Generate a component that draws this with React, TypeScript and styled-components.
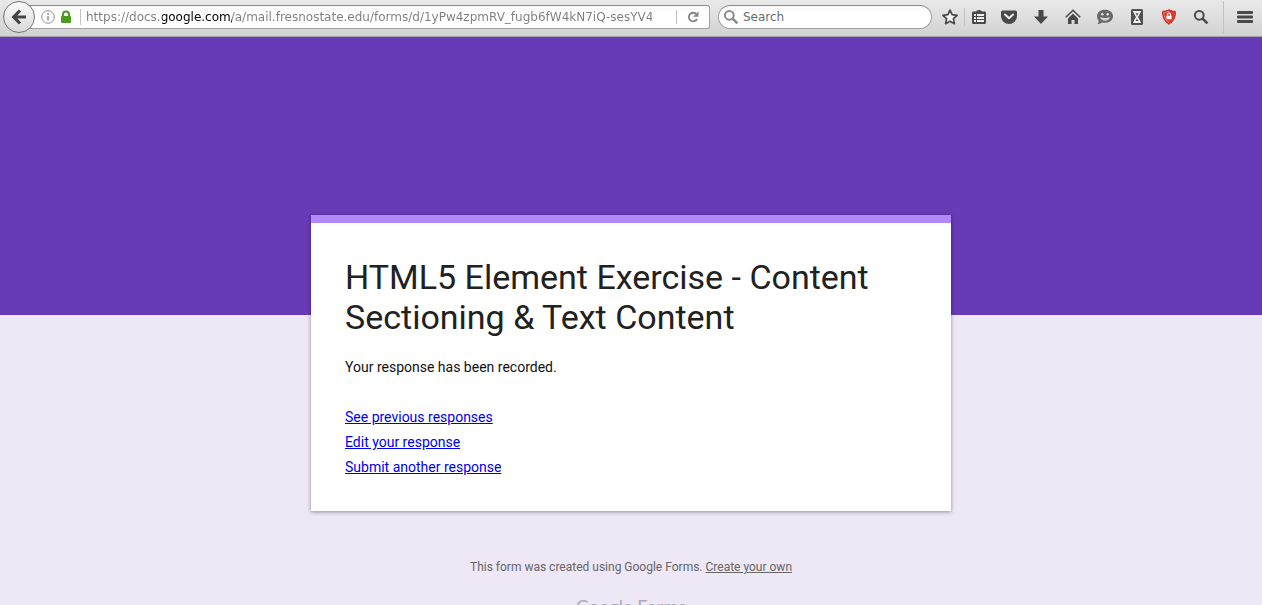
import React from "react";
import styled, { createGlobalStyle } from "styled-components";

const GlobalStyle = createGlobalStyle`
  *, *::before, *::after { box-sizing: border-box; }
  body { margin: 0; background: #ede7f6; }
`;

const Browser = styled.div`
  display: flex;
  flex-direction: column;
  height: 100vh;
  font-family: Roboto, "Liberation Sans", sans-serif;
`;

const Toolbar = styled.header`
  display: flex;
  align-items: center;
  flex: none;
  height: 37px;
  padding: 0 8px 3px 3px;
  background: linear-gradient(#e9e9e9, #d2d2d2);
  border-bottom: 1px solid #a6a2ae;
`;

const BackButton = styled.button`
  position: relative;
  display: flex;
  align-items: center;
  justify-content: center;
  flex: none;
  width: 32px;
  height: 32px;
  padding: 0;
  border: 1px solid #747474;
  border-radius: 50%;
  background: linear-gradient(#fafafa, #d9d9d9);
`;

const AddressBar = styled.div`
  display: flex;
  align-items: center;
  flex: 1;
  min-width: 0;
  height: 24px;
  margin-left: -8px;
  padding-left: 11px;
  border: 1px solid #a2a2a2;
  border-top-color: #8c8c8c;
  border-radius: 0 3px 3px 0;
  background: linear-gradient(#f6f6f6, #ffffff 6px);
`;

const BarIcon = styled.button`
  display: flex;
  align-items: center;
  justify-content: center;
  flex: none;
  width: 18px;
  height: 22px;
  padding: 0;
  border: 0;
  background: none;
`;

const Divider = styled.span<{ $height: number; $gap: number }>`
  flex: none;
  width: 1px;
  height: ${(p) => p.$height}px;
  margin: 0 ${(p) => p.$gap}px;
  background: #c2c2c2;
`;

const UrlInput = styled.input`
  flex: 1;
  min-width: 0;
  height: 20px;
  margin-right: 24px;
  padding: 0;
  border: 0;
  outline: 0;
  font: 12px/20px "DejaVu Sans", sans-serif;
  color: #7d7d7d;
  background: linear-gradient(90deg, #7d7d7d 76px, #000000 76px, #000000 146px, #7d7d7d 146px);
  background-clip: text;
  -webkit-background-clip: text;
  -webkit-text-fill-color: transparent;
`;

const ReloadButton = styled(BarIcon)`
  width: 24px;
  margin: 0 4px;
`;

const SearchBox = styled.label`
  display: flex;
  align-items: center;
  flex: none;
  width: 214px;
  height: 24px;
  margin: 0 9px 0 8px;
  padding: 0 12px 0 4px;
  gap: 4px;
  border: 1px solid #a2a2a2;
  border-top-color: #8c8c8c;
  border-radius: 12px;
  background: linear-gradient(#f6f6f6, #ffffff 6px);
`;

const SearchInput = styled.input`
  flex: 1;
  min-width: 0;
  height: 20px;
  padding: 0;
  border: 0;
  outline: 0;
  background: none;
  font: 12px/20px "DejaVu Sans", sans-serif;
  color: #222222;
  &::placeholder { color: #6c6c6c; opacity: 1; }
`;

const Tools = styled.nav`
  display: flex;
  align-items: center;
  flex: none;
`;

const ToolList = styled.div`
  display: flex;
  gap: 14px;
  margin: 0 13px 0 12px;
`;

const MenuButton = styled(BarIcon)`
  margin-left: 12px;
`;

const Page = styled.main`
  flex: 1;
  min-height: 0;
  overflow: hidden;
  padding-top: 178px;
  background: linear-gradient(#673ab7 278px, #ede7f6 278px);
`;

const Card = styled.section`
  width: 640px;
  max-width: 100%;
  margin: 0 auto;
  padding: 34px 34px 31px;
  border-top: 8px solid #b388ff;
  background: #ffffff;
  box-shadow: 0 1px 4px rgba(0, 0, 0, 0.4);
  color: #212121;
`;

const Title = styled.h1`
  margin: 0 0 18px;
  font-size: 34px;
  font-weight: 400;
  line-height: 40px;
`;

const Message = styled.p`
  margin: 0 0 25px;
  font-size: 14px;
  line-height: 25px;
  color: #111111;
`;

const Links = styled.ul`
  margin: 0;
  padding: 0;
  list-style: none;
  font-size: 14px;
  line-height: 25px;
`;

const Link = styled.a`
  color: #0000ee;
`;

const Footer = styled.footer`
  margin-top: 47px;
  text-align: center;
  font-size: 12px;
  line-height: 18px;
  color: #666666;
`;

const FooterText = styled.p`
  margin: 0;
  a { color: inherit; }
`;

const Logo = styled.p`
  margin: 18px 0 0;
  font: 18px/24px Lato, sans-serif;
  color: #b0a9bb;
`;

const ink = "#494949";

const BackIcon = () => (
  <svg width="16" height="16" viewBox="0 0 16 16" fill="none" stroke="#444" strokeWidth="3.2" aria-hidden="true">
    <path d="M9 1.5 2.7 8 9 14.5M3 8h12" />
  </svg>
);
const InfoIcon = () => (
  <svg width="14" height="14" viewBox="0 0 14 14" fill="none" stroke="#919191" aria-hidden="true">
    <circle cx="7" cy="7" r="6.3" />
    <path d="M7 6v4.5M7 3.3v1.6" strokeWidth="1.5" />
  </svg>
);
const LockIcon = () => (
  <svg width="12" height="14" viewBox="0 0 12 14" aria-hidden="true">
    <path d="M3 7V4.5a3 3 0 0 1 6 0V7" fill="none" stroke="#4b9c22" strokeWidth="2" />
    <rect x="1" y="6" width="10" height="7" rx="1" fill="#4b9c22" />
  </svg>
);
const ReloadIcon = () => (
  <svg width="12" height="12" viewBox="0 0 12 12" aria-hidden="true">
    <path d="M9 2.8A4.3 4.3 0 1 0 10 8" fill="none" stroke="#858585" strokeWidth="1.9" />
    <path d="M11.5.3v5.5H6z" fill="#858585" />
  </svg>
);
const LensIcon = ({ color }: { color: string }) => (
  <svg width="16" height="16" viewBox="0 0 16 16" fill="none" stroke={color} aria-hidden="true">
    <circle cx="6.3" cy="6.3" r="4.4" strokeWidth="2" />
    <path d="m9.6 9.6 4.8 4.8" strokeWidth="2.6" />
  </svg>
);
const StarIcon = () => (
  <svg width="18" height="18" viewBox="0 0 18 18" aria-hidden="true">
    <path d="m9 2.1 2.1 4.6 5 .6-3.7 3.4 1 5L9 13.2l-4.4 2.5 1-5L1.9 7.3l5-.6z" fill="#f5f5f5" stroke={ink} strokeWidth="1.7" strokeLinejoin="round" />
  </svg>
);
const ListIcon = () => (
  <svg width="16" height="16" viewBox="0 0 16 16" aria-hidden="true">
    <path d="M1 3.7Q1 2.5 2.2 2.5H5Q5.3 1 8 1t3 1.5h2.8Q15 2.5 15 3.7v10.1Q15 15 13.8 15H2.2Q1 15 1 13.8z" fill={ink} />
    <path d="M3 5h2v2H3zm3 0h7v2H6zM3 8h2v2H3zm3 0h7v2H6zM3 11h2v2H3zm3 0h7v2H6z" fill="#eee" />
  </svg>
);
const PocketIcon = () => (
  <svg width="18" height="16" viewBox="0 0 18 16" aria-hidden="true">
    <path d="M2.5 1.5h13q1.5 0 1.5 1.5v4a8 8 0 0 1-16 0V3q0-1.5 1.5-1.5z" fill={ink} />
    <path d="m5 5.5 4 3.8 4-3.8" fill="none" stroke="#eee" strokeWidth="2" strokeLinecap="round" strokeLinejoin="round" />
  </svg>
);
const DownloadIcon = () => (
  <svg width="16" height="16" viewBox="0 0 16 16" aria-hidden="true">
    <path d="M5.5 1h5v6.5H15L8 15 1 7.5h4.5z" fill={ink} />
  </svg>
);
const HomeIcon = () => (
  <svg width="16" height="16" viewBox="0 0 16 16" aria-hidden="true">
    <path d="m.8 8.3 7.2-7 7.2 7" fill="none" stroke={ink} strokeWidth="1.6" />
    <path d="m3 9.400 5-4.800 5 4.800V15H9.500v-4h-3v4H3z" fill={ink} />
  </svg>
);
const ChatIcon = () => (
  <svg width="18" height="16" viewBox="0 0 18 16" aria-hidden="true">
    <path d="M9 .8c4.6 0 8 2.7 8 6.5s-3.4 6.5-8 6.5q-1.6 0-3-.4Q4 15 1.5 15q1.3-1.3 1.2-3.2Q1 10 1 7.300C1 3.500 4.400.8 9 .8z" fill="#686868" />
    <circle cx="6.300" cy="5.300" r="1.200" fill="#e8e8e8" />
    <circle cx="11.700" cy="5.300" r="1.200" fill="#e8e8e8" />
    <path d="M4 8q5 1.800 10 0-1 3.800-5 3.800T4 8z" fill="#cfcfcf" />
  </svg>
);
const HourglassIcon = () => (
  <svg width="16" height="16" viewBox="0 0 16 16" aria-hidden="true">
    <rect x="2" y="0" width="12" height="16" rx="1.5" fill="#505050" />
    <path d="M4 2h8v1.500h-1v1.300L9 8l2 3.200v1.300h1V14H4v-1.500h1v-1.300L7 8 5 4.800V3.500H4z" fill="#eee" />
    <path d="M6.500 4.200h3L8 6.800zM8 10l1.600 2H6.400z" fill="#505050" />
  </svg>
);
const ShieldIcon = () => (
  <svg width="16" height="16" viewBox="0 0 16 16" aria-hidden="true">
    <path d="M8 .8q3 1.600 6.400 1.600Q15 11 8 15.300 1 11 1.600 2.400 5 2.400 8 .8z" fill="#e03a2c" stroke="#c42a20" />
    <path d="M8 2.200q-2.600 1.300-5.200 1.400Q3 10 8 13.800" fill="none" stroke="#f07868" />
    <path d="M6.500 7V5.700a1.500 1.500 0 0 1 3 0V7" fill="none" stroke="#fff" strokeWidth="1.200" />
    <rect x="5.500" y="6.700" width="5" height="3.600" rx=".5" fill="#fff" />
  </svg>
);
const MenuIcon = () => (
  <svg width="16" height="14" viewBox="0 0 16 14" aria-hidden="true">
    <path d="M1 1h14q1 0 1 1v1q0 1-1 1H1Q0 4 0 3V2q0-1 1-1zm0 4.500h14q1 0 1 1v1q0 1-1 1H1q-1 0-1-1v-1q0-1 1-1zM1 10h14q1 0 1 1v1q0 1-1 1H1q-1 0-1-1v-1q0-1 1-1z" fill={ink} />
  </svg>
);

const tools = [
  { name: "Save to Pocket", icon: <PocketIcon /> },
  { name: "Downloads", icon: <DownloadIcon /> },
  { name: "Home", icon: <HomeIcon /> },
  { name: "Chat", icon: <ChatIcon /> },
  { name: "Timer", icon: <HourglassIcon /> },
  { name: "Privacy shield", icon: <ShieldIcon /> },
  { name: "Find", icon: <LensIcon color={ink} /> },
];

const responseLinks = ["See previous responses", "Edit your response", "Submit another response"];

export default function App() {
  return (
    <Browser>
      <GlobalStyle />
      <Toolbar>
        <BackButton aria-label="Back"><BackIcon /></BackButton>
        <AddressBar>
          <BarIcon aria-label="Site information"><InfoIcon /></BarIcon>
          <BarIcon aria-label="Secure connection"><LockIcon /></BarIcon>
          <Divider $height={16} $gap={5} />
          <UrlInput
            aria-label="Address"
            defaultValue="https://docs.google.com/a/mail.fresnostate.edu/forms/d/1yPw4zpmRV_fugb6fW4kN7iQ-sesYV4"
          />
          <Divider $height={14} $gap={0} />
          <ReloadButton aria-label="Reload"><ReloadIcon /></ReloadButton>
        </AddressBar>
        <SearchBox>
          <LensIcon color="#8b8b8b" />
          <SearchInput aria-label="Search" placeholder="Search" />
        </SearchBox>
        <Tools aria-label="Browser tools">
          <BarIcon aria-label="Bookmark this page"><StarIcon /></BarIcon>
          <Divider $height={18} $gap={5} />
          <BarIcon aria-label="Bookmarks list"><ListIcon /></BarIcon>
          <ToolList>
            {tools.map((tool) => (
              <BarIcon key={tool.name} aria-label={tool.name}>{tool.icon}</BarIcon>
            ))}
          </ToolList>
          <Divider $height={32} $gap={0} />
        </Tools>
        <MenuButton aria-label="Menu"><MenuIcon /></MenuButton>
      </Toolbar>
      <Page>
        <Card>
          <Title>HTML5 Element Exercise - Content Sectioning &amp; Text Content</Title>
          <Message>Your response has been recorded.</Message>
          <Links>
            {responseLinks.map((text) => (
              <li key={text}><Link href="#">{text}</Link></li>
            ))}
          </Links>
        </Card>
        <Footer>
          <FooterText>
            This form was created using Google Forms. <a href="#">Create your own</a>
          </FooterText>
          <Logo>Google Forms</Logo>
        </Footer>
      </Page>
    </Browser>
  );
}
